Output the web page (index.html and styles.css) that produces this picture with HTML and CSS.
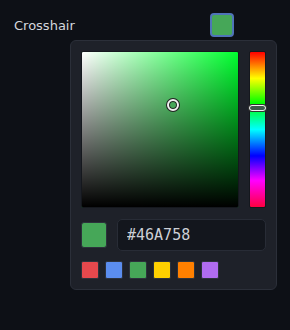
FILE: index.html
```html
<!DOCTYPE html>
<html lang="en">
<head>
  <meta charset="UTF-8">
  <meta name="viewport" content="width=device-width, initial-scale=1.0">
  <title>Crosshair Colour</title>
  <link rel="stylesheet" href="styles.css">
</head>
<body>
  <div class="field">
    <span class="field-label">Crosshair</span>
    <button type="button" class="trigger" aria-label="Pick colour"></button>
  </div>

  <div class="picker">
    <div class="picker-top">
      <div class="sv-area">
        <div class="sv-cursor" style="left: 58.1%; top: 34.5%;"></div>
      </div>
      <div class="hue-bar">
        <div class="hue-thumb" style="top: 36.4%;"></div>
      </div>
    </div>

    <div class="picker-value">
      <div class="preview"></div>
      <input type="text" class="hex-input" value="#46A758" spellcheck="false">
    </div>

    <div class="presets">
      <span class="preset" style="background: #e5484d;"></span>
      <span class="preset" style="background: #5b8def;"></span>
      <span class="preset" style="background: #46a758;"></span>
      <span class="preset" style="background: #ffd000;"></span>
      <span class="preset" style="background: #ff8000;"></span>
      <span class="preset" style="background: #b06cf0;"></span>
    </div>
  </div>
</body>
</html>
```

FILE: styles.css
```css
body {
  font-family: "DejaVu Sans", sans-serif;
  background-color: #0d1016;
  color: #d4d7dd;
  margin: 0;
  padding: 0;
}
.field {
  display: flex;
  align-items: center;
  height: 24px;
  margin-top: 13px;
  padding-left: 14px;
}
.field-label {
  width: 196px;
  font-size: 13px;
}
.trigger {
  width: 24px;
  height: 24px;
  padding: 0;
  border: 2px solid #4f74b8;
  border-radius: 4px;
  background-color: #46a758;
  cursor: pointer;
}
.picker {
  box-sizing: border-box;
  width: 207px;
  margin: 3px 0 0 70px;
  padding: 10px;
  background-color: #1e2129;
  border: 1px solid #2b2f39;
  border-radius: 6px;
}
.picker-top {
  display: flex;
  gap: 10px;
  height: 157px;
}
.sv-area {
  position: relative;
  box-sizing: border-box;
  width: 158px;
  border: 1px solid #15181e;
  border-radius: 2px;
  background:
    linear-gradient(to bottom, rgba(0, 0, 0, 0), #000),
    linear-gradient(to right, #fff, rgba(255, 255, 255, 0)),
    hsl(131, 100%, 50%);
}
.sv-cursor {
  position: absolute;
  width: 8px;
  height: 8px;
  border: 2px solid #f2f2f2;
  border-radius: 50%;
  background-color: #46a758;
  box-shadow: 0 0 0 1px #222, inset 0 0 0 1px #222;
  transform: translate(-50%, -50%);
}
.hue-bar {
  position: relative;
  box-sizing: border-box;
  flex: 1;
  border: 1px solid #15181e;
  border-radius: 2px;
  background: linear-gradient(to bottom,
    #ff0000 0%, #ffff00 17%, #00ff00 33%, #00ffff 50%,
    #0000ff 67%, #ff00ff 83%, #ff0040 100%);
}
.hue-thumb {
  position: absolute;
  left: -1px;
  right: -1px;
  height: 4px;
  border: 1px solid #f2f2f2;
  border-radius: 3px;
  background-color: #3e5a4c;
  box-shadow: 0 0 0 1px #333;
  transform: translateY(-50%);
}
.picker-value {
  display: flex;
  align-items: center;
  gap: 10px;
  margin-top: 11px;
}
.preview {
  box-sizing: border-box;
  width: 26px;
  height: 26px;
  border: 1px solid #2c313b;
  border-radius: 3px;
  background-color: #46a758;
}
.hex-input {
  box-sizing: border-box;
  flex: 1;
  min-width: 0;
  height: 32px;
  padding: 0 9px;
  background-color: #13161d;
  border: 1px solid #282c36;
  border-radius: 5px;
  color: #cdd0d6;
  font-family: "DejaVu Sans Mono", monospace;
  font-size: 15px;
  outline: none;
}
.presets {
  display: flex;
  gap: 6px;
  margin-top: 10px;
}
.preset {
  box-sizing: border-box;
  width: 18px;
  height: 18px;
  border: 1px solid #2c313b;
  border-radius: 2px;
}
```
